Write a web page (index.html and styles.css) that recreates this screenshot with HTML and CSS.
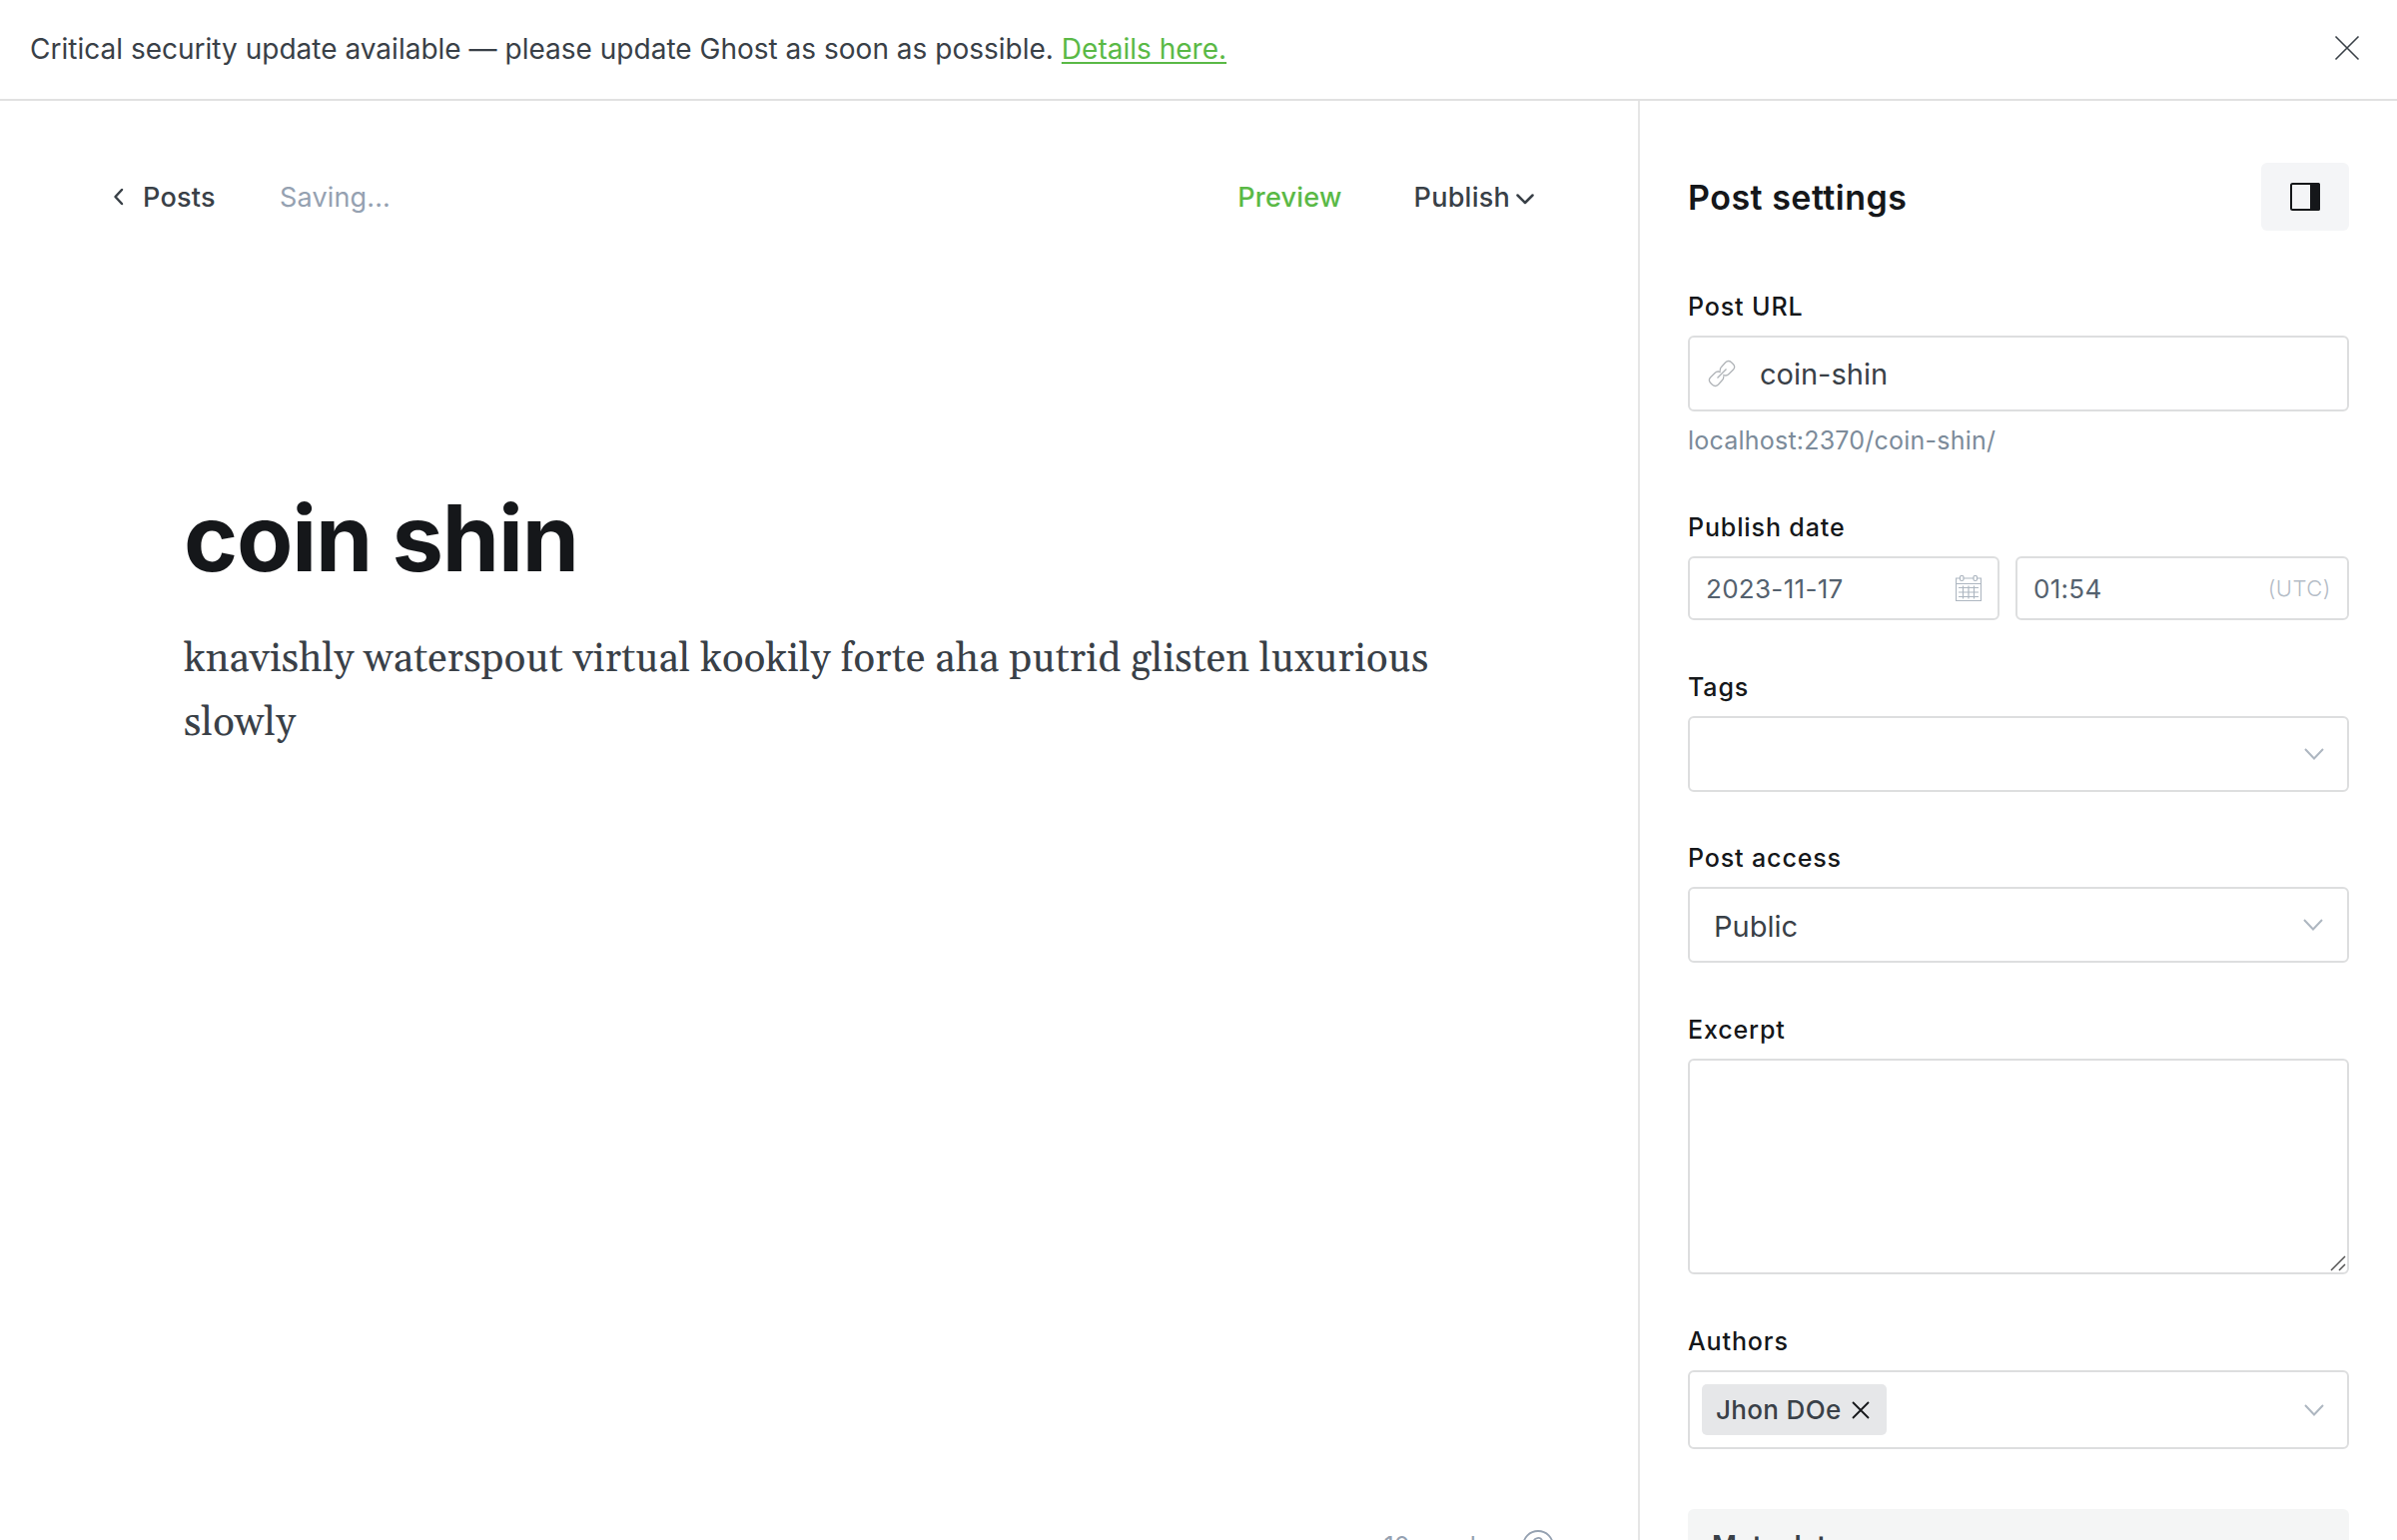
FILE: index.html
```
<!DOCTYPE html>
<html lang="en">
<head>
<meta charset="utf-8">
<title>Edit post</title>
<link rel="stylesheet" href="styles.css">
</head>
<body>
<div class="app">
  <header class="banner">
    <p class="banner-text"><span class="t-banner">Critical security update available — please update Ghost as soon as possible. <a class="link">Details here.</a></span></p>
    <svg class="close" width="26" height="26" viewBox="0 0 26 26"><path d="M1.500 1.500l23 23M24.500 1.500l-23 23"/></svg>
  </header>
  <div class="body">
    <main class="editor">
      <nav class="toolbar">
        <a class="back"><svg width="11" height="18" viewBox="0 0 11 18"><path d="M9 2L2.500 9L9 16"/></svg><span class="t-posts">Posts</span></a>
        <span class="status t-saving">Saving...</span>
        <a class="preview t-preview">Preview</a>
        <a class="publish"><span class="t-publish">Publish</span><svg width="18" height="11" viewBox="0 0 18 11"><path d="M1.500 1.500L9 9L16.500 1.500"/></svg></a>
      </nav>
      <article class="post">
        <h1 class="title"><span class="t-title">coin shin</span></h1>
        <p class="copy"><span class="t-copy">knavishly waterspout virtual kookily forte aha putrid glisten luxurious</span><br>slowly</p>
      </article>
      <footer class="footer">
        <span class="t-words">10 words</span>
        <svg width="32" height="32" viewBox="0 0 32 32"><circle cx="16" cy="16" r="15"/><path d="M11.500 12.500a4.500 4.500 0 1 1 6.500 4q-2 1-2 3.500M16 23v1.500"/></svg>
      </footer>
    </main>
    <aside class="settings">
      <div class="settings-head">
        <h2 class="t-head">Post settings</h2>
        <button class="toggle"><svg width="30" height="28" viewBox="0 0 30 28"><rect class="frame" x="1" y="1" width="28" height="26" rx="1.500"/><path class="pane" d="M20 0h8a2 2 0 0 1 2 2v24a2 2 0 0 1-2 2h-8z"/></svg></button>
      </div>
      <section class="field url">
        <label class="t-url">Post URL</label>
        <div class="box">
          <svg class="link-icon" width="28" height="28" viewBox="-1 -1 28 28"><path d="M11.500 10.500C11 9 11.500 7.500 12.500 6.500L16.500 2C18.500 0 20.500 0 22.500 1.700L24.500 3.800C26 5.500 26 7.500 24.300 9.200L20 13.500C18.500 15 16 15.200 14.300 14.200M14.500 15.500C15 17 14.500 18.500 13.500 19.500L9.500 24C7.500 26 5.500 26 3.500 24.300L1.500 22.200C0 20.500 0 18.500 1.700 16.800L6 12.500C7.500 11 10 10.800 11.700 11.800M8.500 17.500L17.500 8.500"/></svg>
          <span class="t-slug">coin-shin</span>
        </div>
        <p class="hint"><span class="t-host">localhost:2370/coin-shin/</span></p>
      </section>
      <section class="field date">
        <label class="t-date">Publish date</label>
        <div class="row">
          <div class="box small day"><span class="t-day">2023-11-17</span>
            <svg class="calendar" width="26" height="26" viewBox="0 0 26 26"><path d="M4 3H.500v22.500h25V3H22M8 3h10M.500 8.500h25M3 12.500h20M3 17h20M3 21.500h20M7.500 10.500v13M13 10.500v13M18.500 10.500v13"/><rect x="4.500" y=".500" width="3.500" height="5" rx="1.500"/><rect x="18" y=".500" width="3.500" height="5" rx="1.500"/></svg></div>
          <div class="box small time"><span class="t-time">01:54</span><span class="zone t-zone">(UTC)</span></div>
        </div>
      </section>
      <section class="field tags">
        <label class="t-tags">Tags</label>
        <div class="box"><svg class="chev" width="20" height="12" viewBox="0 0 20 12"><path d="M1 1l9 9.500L19 1"/></svg></div>
      </section>
      <section class="field access">
        <label class="t-access">Post access</label>
        <div class="box"><span class="t-public">Public</span><svg class="chev" width="20" height="12" viewBox="0 0 20 12"><path d="M1 1l9 9.500L19 1"/></svg></div>
      </section>
      <section class="field excerpt">
        <label class="t-excerpt">Excerpt</label>
        <div class="box area"><svg class="grip" width="16" height="16" viewBox="0 0 16 16"><path d="M1 15L15 1M9 15l6-6"/></svg></div>
      </section>
      <section class="field authors">
        <label class="t-authors">Authors</label>
        <div class="box"><span class="chip"><span class="t-jhon">Jhon DOe</span><svg width="18" height="18" viewBox="0 0 18 18"><path d="M1 1l16 16M17 1L1 17"/></svg></span><svg class="chev" width="20" height="12" viewBox="0 0 20 12"><path d="M1 1l9 9.500L19 1"/></svg></div>
      </section>
      <div class="meta"><span class="t-meta">Meta data</span></div>
    </aside>
  </div>
</div>
</body>
</html>
```
FILE: styles.css
```
* { box-sizing: border-box; }
body { margin: 0; background: #fff; color: #394047; font-family: Inter, "Liberation Sans", sans-serif; }
h1, h2, p { margin: 0; }
svg { display: block; flex: none; fill: none; stroke: currentColor; }
.app { height: 1542px; overflow: hidden; display: flex; flex-direction: column; }

.banner { height: 101px; flex: none; border-bottom: 2px solid #e1e1e1; padding: 0 37px 3px 30px; display: flex; align-items: center; justify-content: space-between; font-size: 28px; letter-spacing: .01px; white-space: nowrap; }
.banner-text { padding-top: 2px; }
.link { color: #5ab946; text-decoration: underline; text-decoration-thickness: 2px; text-underline-offset: 3px; }
.close { stroke-width: 1.6; }

.body { flex: 1; min-height: 0; display: flex; }
.editor { width: 1640px; display: flex; flex-direction: column; }
.toolbar { height: 66px; margin-top: 63px; padding: 0 104px 0 113px; display: flex; align-items: center; font-size: 27px; font-weight: 500; letter-spacing: .25px; white-space: nowrap; }
.back { display: flex; align-items: center; gap: 19px; width: 167px; }
.back svg, .publish svg { stroke-width: 2.5; stroke-linecap: round; stroke-linejoin: round; }
.status { color: #95a1b1; font-weight: 400; letter-spacing: .15px; }
.preview { margin-left: auto; margin-right: 72px; color: #5ab946; }
.publish { display: flex; align-items: center; gap: 6px; }
.publish svg { margin-top: 5px; }

.post { padding: 253px 184px 0; flex: 1; }
.title { font-size: 92px; line-height: 112px; font-weight: 700; letter-spacing: -1.2px; color: #15171a; white-space: nowrap; }
.copy { margin-top: 34px; font: 40px/64px Gelasio, Georgia, "Liberation Serif", serif; letter-spacing: .2px; white-space: nowrap; }
.footer { height: 10px; padding-right: 84px; display: flex; justify-content: flex-end; align-items: flex-start; gap: 33px; color: #95a1b1; font-size: 25px; line-height: 32px; }
.footer svg { stroke-width: 1.8; }

.settings { width: 760px; border-left: 2px solid #e6e6e6; padding: 62px 48px 0; display: flex; flex-direction: column; }
.settings-head { height: 68px; flex: none; margin-bottom: 62px; display: flex; align-items: center; justify-content: space-between; color: #15171a; }
h2 { font-size: 34px; font-weight: 600; letter-spacing: .5px; white-space: nowrap; }
.toggle { width: 88px; height: 68px; border: 0; padding: 0; border-radius: 6px; background: #f4f5f7; color: #15171a; display: flex; align-items: center; justify-content: center; }
.frame { stroke-width: 2; }
.pane { fill: currentColor; stroke: none; }
.field { flex: none; display: flex; flex-direction: column; }
.field label { height: 43px; line-height: 28px; font-size: 25px; font-weight: 500; letter-spacing: .88px; color: #15171a; white-space: nowrap; }
.box { height: 76px; border: 2px solid #dddedf; border-radius: 6px; display: flex; align-items: center; font-size: 29px; white-space: nowrap; }
.small { height: 64px; font-size: 26px; letter-spacing: .3px; color: #54616e; padding: 0 16px; justify-content: space-between; }
.row { display: flex; gap: 16px; }
.day { width: 312px; }
.time { flex: 1; }
.url { height: 221px; }
.url .box { padding-left: 18px; gap: 24px; }
.link-icon { color: #b0b4b8; stroke-width: 1.3; }
.hint { margin-top: 13px; font-size: 25px; line-height: 32px; letter-spacing: .22px; color: #7c8b9a; white-space: nowrap; }
.date { height: 160px; }
.calendar { color: #aeb7c1; stroke-width: 1.2; }
.zone { color: #b5bdc7; font-weight: 300; font-size: 22px; letter-spacing: .5px; }
.tags, .access { height: 171px; }
.access { height: 172px; }
.access .box { padding-left: 24px; }
.access span { padding-top: 2px; }
.chev { margin-left: auto; margin-right: 23px; color: #aeb7c1; stroke-width: 2; }
.access .chev { margin-right: 24px; }
.excerpt { height: 312px; }
.box.area { height: 216px; align-items: flex-end; justify-content: flex-end; padding: 0 1px 1px 0; }
.grip { color: #555; stroke-width: 1.5; }
.authors .box { height: 79px; padding-left: 12px; }
.chip { width: 185px; height: 51px; border-radius: 5px; background: #e6e7e9; padding: 0 17px 0 14px; display: flex; align-items: center; justify-content: space-between; font-size: 26px; font-weight: 500; letter-spacing: .35px; }
.chip svg { color: #15171a; stroke-width: 1.8; }
.meta { height: 120px; flex: none; margin-top: 60px; border-radius: 6px; background: #f4f5f5; padding: 21px 24px; font-size: 27px; line-height: 32px; font-weight: 600; }
```
